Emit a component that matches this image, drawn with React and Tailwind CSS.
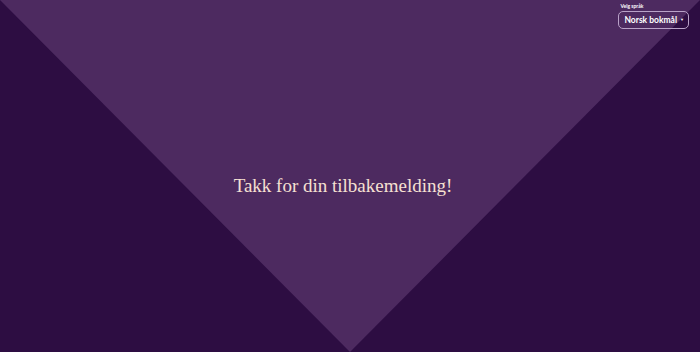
export default function App() {
  return (
    <div className="relative w-[700px] h-[352px] overflow-hidden bg-[#2d0d42] font-['Lato',sans-serif]">
      {/* BACKGROUND TRIANGLE */}
      <div className="absolute inset-0 bg-[#4d2a60] [clip-path:polygon(0_0,100%_0,50%_100%)]" />

      {/* LANGUAGE PICKER */}
      <div className="absolute top-[3px] right-[11px] flex flex-col items-start">
        <span className="text-[5px] leading-[7px] font-bold text-white pl-[2px]">Velg språk</span>
        <button className="mt-[1px] h-[18px] flex items-center gap-[3px] pl-[5px] pr-[4px] whitespace-nowrap rounded-[5px] border border-[#b9a2c8] text-white text-[8.5px] font-bold">
          Norsk bokmål
          <span className="text-[4px]">▼</span>
        </button>
      </div>

      {/* MESSAGE */}
      <div className="relative h-full flex items-center justify-center pr-[14px]">
        <h1 className="mt-[20px] whitespace-nowrap text-[#f6e0d2] text-[19px] font-['Liberation_Serif',serif]">
          Takk for din tilbakemelding!
        </h1>
      </div>
    </div>
  );
}
